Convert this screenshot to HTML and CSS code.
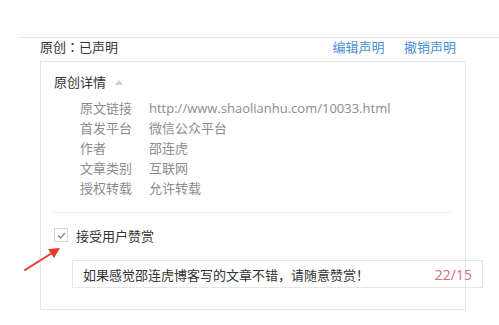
FILE: index.html
```html
<!DOCTYPE html>
<html lang="zh">
  <head>
    <meta charset="UTF-8" />
    <title>原创声明</title>
    <link rel="stylesheet" href="styles.css">
  </head>
  <body>
    <div class="decl">
      <div class="decl-head">
        <span class="decl-title">原创<span class="colon" lang="ja">：</span>已声明</span>
        <span class="decl-links">
          <a href="#">编辑声明</a>
          <a href="#">撤销声明</a>
        </span>
      </div>

      <div class="decl-box">
        <div class="detail-title">原创详情 <i class="caret-up"></i></div>
        <dl class="detail-list">
          <div class="row"><dt>原文链接</dt><dd>http://www.shaolianhu.com/10033.html</dd></div>
          <div class="row"><dt>首发平台</dt><dd>微信公众平台</dd></div>
          <div class="row"><dt>作者</dt><dd>邵连虎</dd></div>
          <div class="row"><dt>文章类别</dt><dd>互联网</dd></div>
          <div class="row"><dt>授权转载</dt><dd>允许转载</dd></div>
        </dl>

        <div class="sep"></div>

        <label class="reward">
          <span class="check">
            <svg width="9" height="7" viewBox="0 0 9 7"><path d="M1 3.5 L3.5 6 L8 1" fill="none" stroke="#8a8a8a" stroke-width="1.4"/></svg>
          </span>
          接受用户赞赏
        </label>

        <div class="reward-input">
          <span>如果感觉邵连虎博客写的文章不错，请随意赞赏！</span>
          <span class="count">22/15</span>
        </div>
      </div>
    </div>

    <svg class="arrow" width="40" height="30" viewBox="0 0 40 30">
      <path d="M1 27 L28 10" stroke="#e8382e" stroke-width="2" stroke-linecap="round"/>
      <path d="M36 5 L24 6 L30 15 Z" fill="#e8382e"/>
    </svg>
  </body>
</html>
```

FILE: styles.css
```css
body {
  margin: 0;
  font-family: "Open Sans", "Noto Sans CJK SC", sans-serif;
  font-size: 13px;
  color: #333;
  background: #fff;
}
.decl {
  margin: 37px 0 0 18px;
  border-top: 1px solid #e8e8e8;
}
.decl-head {
  display: flex;
  justify-content: space-between;
  padding: 0 43px 0 22px;
  height: 23px;
  line-height: 18px;
}
.colon {
  font-family: "Noto Sans CJK JP", sans-serif;
}
.decl-links a {
  color: #4a8fd6;
  text-decoration: none;
  margin-left: 16px;
}
.decl-box {
  margin-left: 22px;
  border: 1px solid #e6e6e6;
  padding: 0 0 21px 13px;
  width: 411px;
}
.detail-title {
  height: 36px;
  line-height: 40px;
  color: #333;
}
.caret-up {
  display: inline-block;
  width: 0;
  height: 0;
  border-left: 4px solid transparent;
  border-right: 4px solid transparent;
  border-bottom: 5px solid #cfcfcf;
  margin-left: 6px;
  vertical-align: 2px;
}
.detail-list {
  margin: 0;
  padding: 0 0 0 26px;
  color: #8c8c8c;
}
.row {
  display: flex;
  line-height: 20px;
}
.row dt {
  width: 69px;
}
.row dd {
  margin: 0;
}
.sep {
  margin: 14px 14px 0 0;
  border-top: 1px solid #ececec;
}
.reward {
  display: flex;
  align-items: center;
  height: 20px;
  margin-top: 12px;
  color: #333;
}
.check {
  display: inline-flex;
  align-items: center;
  justify-content: center;
  width: 12px;
  height: 12px;
  border: 1px solid #d6d6d6;
  margin-right: 8px;
}
.reward-input {
  display: flex;
  justify-content: space-between;
  align-items: center;
  margin: 15px 0 0 18px;
  width: 389px;
  height: 26px;
  padding: 0 10px;
  border: 1px solid #e6e6e6;
  color: #333;
}
.count {
  color: #d86a78;
  font-size: 14px;
}
.arrow {
  position: absolute;
  left: 24px;
  top: 243px;
}
```
